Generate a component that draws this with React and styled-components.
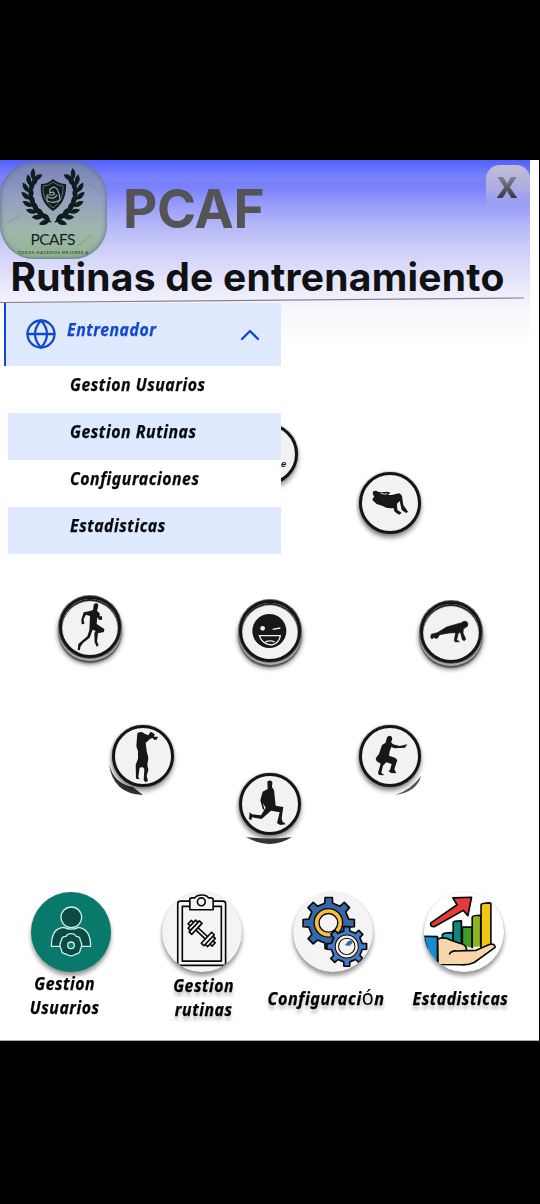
import React from "react";
import styled, { createGlobalStyle, css } from "styled-components";

const Global = createGlobalStyle`
  * { box-sizing: border-box; }
  body { margin: 0; background: #000; }
`;

const Phone = styled.div`
  height: 1204px;
  padding: 160px 1px 163px 0;
  background: #000;
  overflow: hidden;
`;

const Screen = styled.main`
  position: relative;
  display: flex;
  flex-direction: column;
  height: 881px;
  background: #fff;
  border-bottom: 1px solid #aaa;
  font-family: "Noto Sans", sans-serif;
`;

const Header = styled.header`
  width: 530px;
  height: 186px;
  flex: none;
  background: linear-gradient(#5260ff 0, #6570fd 8px, #7b84fa 18px, #7980fb 27px, #9398fa 42px, #b0b3f8 62px, #cccdf8 88px, #dcdcfa 108px, #ebeafb 128px, #f6f6fc 148px, #fff 184px);
`;

const Brand = styled.div`
  display: flex;
  height: 98px;
  padding-top: 2px;
`;

const Logo = styled.svg`
  flex: none;
  width: 107px;
  height: 97px;
  border-radius: 34px;
  background: linear-gradient(#7680b5, #929dc1 35%, #9eb7ac 70%, #91b58e);
  box-shadow: inset 0 0 5px #52648b;
`;

const BrandName = styled.h1`
  margin: 15px 0 0 16px;
  flex: 1;
  font: 700 53px/64px Inter, sans-serif;
  letter-spacing: -0.4px;
  color: #545456;
`;

const Close = styled.button`
  width: 44px;
  height: 44px;
  margin-top: 3px;
  padding: 0;
  border: 0;
  border-radius: 14px 14px 0 0;
  background: linear-gradient(#c2bfd3, #aaaae5 60%, #9fa3f800);
  span {
    display: block;
    margin-left: -2px;
    font: 800 29px/45px Inter, sans-serif;
    background: linear-gradient(#858494 25%, #303039 78%);
    background-clip: text;
    color: transparent;
  }
`;

const Title = styled.h2`
  margin: 0 0 0 10.5px;
  font: 700 39px/38px Inter, sans-serif;
  letter-spacing: ${(p) => p.$tracking}px;
  color: #101113;
  white-space: nowrap;
`;

const Rule = styled.svg`
  display: block;
  width: 524px;
  height: 6px;
  margin-top: 1px;
`;

const Menu = styled.nav`
  position: absolute;
  left: 4px;
  top: 143px;
  width: 277px;
  z-index: 2;
`;

const MenuHead = styled.div`
  display: flex;
  height: 63px;
  padding: 14px 21px 0 20px;
  border-left: 2px solid #1148d0;
  background: #dfe9ff;
  color: #1148d0;
`;

const HeadIcon = styled.svg`
  flex: none;
  width: ${(p) => p.$w}px;
  height: ${(p) => p.$h}px;
  margin-top: ${(p) => p.$top}px;
  fill: none;
  stroke: currentColor;
  stroke-width: 2.3;
  stroke-linecap: round;
  stroke-linejoin: round;
`;

const labelFont = css`
  font-weight: 700;
  font-style: italic;
  font-size: 18px;
  line-height: 24px;
  letter-spacing: 0.6px;
  -webkit-text-stroke: 0.25px currentColor;
  white-space: nowrap;
`;

const Label = styled.span`
  ${labelFont}
  display: block;
  width: max-content;
  transform: scaleX(${(p) => p.$fit || 0.88});
  transform-origin: ${(p) => p.$origin || "left"};
  text-align: center;
  text-shadow: ${(p) => (p.$shadow ? "0 4px 4px #0004" : "none")};
  i {
    font: 400 22px/20px "Noto Sans", sans-serif;
    -webkit-text-stroke: 0;
  }
`;

const HeadLabel = styled.div`
  flex: 1;
  padding-left: 11px;
`;

const MenuItem = styled.div`
  height: 47px;
  margin-left: 4px;
  padding: 6px 0 0 62px;
  background: ${(p) => (p.$tinted ? "#dfe9ff" : "#fff")};
  color: #08090f;
`;

const Wheel = styled.section`
  position: relative;
  flex: none;
  height: 544px;
`;

const Medal = styled.div`
  position: absolute;
  left: ${(p) => p.$x - 31}px;
  top: ${(p) => p.$y - 346 - 31}px;
  width: 62px;
  height: 62px;
  border-radius: 50%;
  background: #f2f2f2;
  border: 3px solid #151515;
  box-shadow: ${(p) =>
    p.$deep
      ? "0 0 0 1px #666, 0 2px 0 1px #aaa, 0 4px 1px 1px #555, 0 5px 5px 1px #0009, inset 0 2px 1px #151515"
      : "0 0 2px #777, 0 4px 5px #0006, -2px 2px 3px #0002"};
  svg { position: absolute; left: -4px; top: -4px; width: 64px; height: 64px; overflow: visible; }
`;

const Shade = styled.svg`
  position: absolute;
  left: ${(p) => p.$x}px;
  top: ${(p) => p.$y - 346}px;
  width: 70px;
  height: 45px;
  filter: blur(0.7px);
`;

const Bottom = styled.footer`
  display: grid;
  grid-template-columns: repeat(4, 131px);
  padding: 2px 0 0 5px;
`;

const Tab = styled.div`
  display: flex;
  flex-direction: column;
  align-items: center;
`;

const TabIcon = styled.svg`
  width: 80px;
  height: 80px;
  border-radius: 50%;
  background: ${(p) => p.$bg};
  box-shadow: 0 4px 4px #0006, 0 0 2px #0002;
  stroke: #080808;
  stroke-width: 5;
  stroke-linejoin: round;
  stroke-linecap: round;
  fill: none;
`;

const TabText = styled.div`
  margin-top: ${(p) => p.$top}px;
  margin-left: ${(p) => p.$shift || 0}px;
`;

const Emblem = () => (
  <Logo viewBox="0 0 107 97">
    <g fill="#111c1d">
      {[1, -1].map((s) => (
        <g key={s} transform={`translate(53 29) scale(${s * 0.92} 0.94)`}>
          <path d="M19-15C33 2 24 25 2 33" fill="none" stroke="#111c1d" strokeWidth="1.5" />
          {[[20, -16, -35], [24, -10, -20], [27, -3, 0], [27, 5, 15], [25, 13, 30], [21, 20, 45], [15, 26, 58], [8, 31, 75]].map(([x, y, r]) => (
            <g key={y} transform={`translate(${x} ${y}) rotate(${r}) scale(1.2)`}>
              <path d="M-1 4Q-7 1-5-5Q1-3-1 4ZM-1 4Q-1-3 5-5Q6 2-1 4Z" />
            </g>
          ))}
        </g>
      ))}
      <path d="M53 17Q59 22 66 22Q67 40 53 49Q39 40 41 22Q48 22 53 17Z" />
      <path d="M53 20Q58 24 63 24Q64 38 53 46Q42 38 43 24Q49 24 53 20Z" fill="none" stroke="#829097" strokeWidth=".7" />
      <path d="M47 39V33H53Q56 32 53 30L50 31V27L54 25Q59 26 60 38Q55 42 47 39M48 35Q54 38 57 33" fill="none" stroke="#9dabad" strokeWidth="1.2" />
    </g>
    <path d="M6 62L21 53M77 84L92 73M89 22L102 33" stroke="#71877c" opacity=".5" />
    <text x="53" y="82.5" textAnchor="middle" fontFamily="Lato" fontSize="15.5" textLength="45" fill="#132220">PCAFS</text>
    <text x="53" y="92" textAnchor="middle" fontFamily="Lato" fontWeight="700" fontSize="4" textLength="70" fill="#344a3d">TODOS HACEMOS MEJORES A</text>
  </Logo>
);

const figures = {
  situp: {
    box: "22 34 192 192",
    art: (
      <>
        <path d="M67 96Q74 91 82 96L91 98L112 96L119 99L112 106L123 106L145 101Q151 102 154 110L158 136L172 156L166 160L153 151L147 124L139 132L140 150L153 160L145 165L132 156L128 145Q109 148 96 139L78 133L65 121Q65 115 71 111Q64 103 67 96Z" />
        <path d="M90 101L104 104L110 101" fill="none" stroke="#f2f2f2" strokeWidth="2.5" />
      </>
    ),
  },
  run: {
    box: "38 28 192 192",
    art: <path d="M145 58Q147 51 154 53Q161 56 158 64L155 75L163 83V92H170V103L161 102L156 95L154 115L177 130L176 139L158 143L155 167L160 179L154 183L148 170L147 142L151 136L142 132L133 156L113 172L105 184L104 193L97 194L99 175L126 152L132 134L134 91L122 87L115 100L117 115L109 116L108 102L115 80L131 77L143 73Z" />,
  },
  push: {
    box: "41 28 192 192",
    art: <path d="M169 96Q175 89 184 93Q190 98 186 107L174 115L173 127L181 145L177 150L171 147L165 124L159 128L154 147L162 153L150 154L147 149L151 126L131 127L103 132L96 143L87 142L88 137L80 145L76 140L78 131L96 126L124 109Z" stroke="#171717" strokeWidth="2" />,
  },
  triceps: {
    box: "33 28 192 192",
    art: <path d="M112 56Q124 48 134 57L145 62L152 51L164 58L162 66L174 66L170 75L162 75L158 70L151 72L137 85L140 109L145 129L142 151L145 166L140 184L144 198L137 203L131 197L133 163L128 157L119 159L115 187L119 194L108 192L107 151L114 132L114 110L109 95Z" />,
  },
  squat: {
    box: "37 26 192 192",
    art: <path d="M124 66Q130 58 138 64Q142 73 136 80L142 87L162 92L185 87L178 97L147 99L137 95L132 108L130 121L148 127L155 134L146 162L152 174L136 173L128 167L133 164L138 146L122 141L112 151L107 172L116 180L100 179L97 173L105 145L93 138L90 129L100 116L109 89L120 82Z" />,
  },
  lunge: {
    box: "413 171 192 192",
    art: <path d="M501 200Q509 193 516 201L515 217L521 225L526 272L549 276L544 309L546 319L557 328L539 330L530 324L538 292L512 287L495 302L484 312L455 307L453 315L446 313L448 292L455 298L482 301L496 278L488 264L493 288L487 281L480 256L487 230L502 222Z" />,
  },
  smile: {
    box: "38 28 192 192",
    art: (
      <>
        <circle cx="132" cy="124" r="51" />
        <circle cx="112" cy="116" r="7" fill="#f2f2f2" />
        <g fill="none" stroke="#f2f2f2" strokeWidth="4">
          <path d="M142 119L165 115M102 138H165Q162 161 139 166Q110 164 102 138ZM119 157Q135 150 148 157" />
        </g>
      </>
    ),
  },
  logo: {
    box: "0 0 192 192",
    art: <text x="138" y="136" fontFamily="Liberation Sans" fontSize="28" fontWeight="700" fontStyle="italic">e</text>,
  },
};

const medals = [
  ["logo", 266.7, 454],
  ["situp", 389.5, 502.5],
  ["run", 89.5, 626.5, true],
  ["smile", 269.5, 631, true],
  ["push", 451, 632, true],
  ["triceps", 143, 755.5],
  ["squat", 389.5, 755.5],
  ["lunge", 269.5, 804],
];

// Closed cog outline with flat-topped teeth.
const cog = (cx, cy, outer, inner, teeth, turn = 0) => {
  const pts = [];
  for (let i = 0; i < teeth; i++) {
    [[-0.25, inner], [-0.18, outer], [0.18, outer], [0.25, inner]].forEach(([o, r]) => {
      const a = ((i + o) / teeth) * Math.PI * 2 - Math.PI / 2 + turn;
      pts.push(`${(cx + r * Math.cos(a)).toFixed(1)} ${(cy + r * Math.sin(a)).toFixed(1)}`);
    });
  }
  return `M${pts.join("L")}Z`;
};

const UsersIcon = () => (
  <TabIcon viewBox="63 20 240 240" $bg="#08796b">
    <g stroke="#c9ede5" strokeWidth="4" fill="#0b4b43">
      <path d="M124 183Q124 128 161 126Q184 137 206 126Q242 132 242 183Z" />
      <circle cx="184" cy="96" r="31" />
      <path d="M183 145Q195 145 198 153Q211 153 211 166Q219 179 211 192Q211 205 198 206Q183 217 168 206Q154 206 154 192Q146 179 154 166Q154 153 168 153Q172 145 183 145Z" />
      <circle cx="183" cy="180" r="10" fill="#08796b" />
    </g>
  </TabIcon>
);

const ClipboardIcon = () => (
  <TabIcon viewBox="455 18 244 244" $bg="#f4f4f4">
    <path d="M503 242V53Q503 46 512 46H640Q649 46 649 54V242ZM517 62H636V229H517Z" />
    <path d="M540 72V39Q540 36 547 36H555Q560 27 577 27Q592 27 597 36H604Q611 36 611 42V72Z" fill="#f4f4f4" />
    <circle cx="575" cy="48" r="12" />
    <g transform="translate(576 144) rotate(43)" strokeWidth="5" fill="#f4f4f4">
      <path d="M-24-5H24V5H-24Z" />
      <path d="M-50-7H-39V7H-50ZM39-7H50V7H39Z" />
      <path d="M-41-17H-30V17H-41ZM30-17H41V17H30Z" />
      <path d="M-31-23H-20V23H-31ZM20-23H31V23H20Z" />
    </g>
  </TabIcon>
);

const GearsIcon = () => (
  <TabIcon viewBox="96 18 244 244" $bg="#f4f4f4">
    <path d={cog(205, 113, 79, 62, 8)} fill="#3568a8" />
    <circle cx="204" cy="112" r="36" fill="#f4f4f4" stroke="#080808" strokeWidth="19" />
    <circle cx="204" cy="112" r="36" stroke="#f6bd43" strokeWidth="11" />
    <path d={cog(260, 184, 61, 48, 8)} fill="#4279c9" />
    <circle cx="260" cy="184" r="30" fill="#f4f4f4" stroke="#080808" strokeWidth="13" />
    <circle cx="260" cy="184" r="30" stroke="#f8eedb" strokeWidth="7" />
    <path d="M247 174L256 179L263 169Q275 162 278 171Q270 186 258 181Z" fill="#3568a8" stroke="none" />
  </TabIcon>
);

const StatsIcon = () => (
  <TabIcon viewBox="491 18 244 244" $bg="#fff">
    <path d="M512 112L592 57L579 36L636 34L625 90L611 74L522 124Q508 124 512 112Z" fill="#e43b3a" />
    <path d="M547 159V148Q550 142 580 142V165" fill="#18a8bd" />
    <path d="M580 165V111Q580 106 605 106V180" fill="#11877c" />
    <path d="M608 183V125H638V188" fill="#449b27" />
    <path d="M638 186V95Q638 89 664 89V184" fill="#8eb51e" />
    <path d="M665 187V57Q665 51 695 51V178" fill="#f2c514" />
    <path d="M532 162Q552 153 573 165L602 175Q621 178 621 197L650 196L690 178Q707 174 708 187L644 233Q628 241 606 240L534 239Z" fill="#f8d6ac" />
    <path d="M569 207Q575 195 593 198L619 197" />
    <path d="M490 153L532 154V231L510 226Z" fill="#188bd1" />
  </TabIcon>
);

export default function App() {
  return (
    <>
      <Global />
      <Phone>
        <Screen>
          <Header>
            <Brand>
              <Emblem />
              <BrandName>PCAF</BrandName>
              <Close><span>X</span></Close>
            </Brand>
            <Title $tracking={0.25}>Rutinas de entrenamiento</Title>
            <Rule viewBox="0 0 524 6"><path d="M0 5.5L524 1" stroke="#858489" strokeWidth="1.2" /></Rule>
          </Header>
          <Menu>
            <MenuHead>
              <HeadIcon $w={30} $h={30} $top={2} viewBox="0 0 30 30">
                <circle cx="15" cy="15" r="13.5" />
                <path d="M1.5 15H28.5M15 1.5C7 10 7 20 15 28.5C23 20 23 10 15 1.5" />
              </HeadIcon>
              <HeadLabel><Label>Entrenador</Label></HeadLabel>
              <HeadIcon $w={20} $h={12} $top={12} viewBox="0 0 20 12"><path d="M2 10L10 2L18 10" /></HeadIcon>
            </MenuHead>
            <MenuItem><Label>Gestion Usuarios</Label></MenuItem>
            <MenuItem $tinted><Label>Gestion Rutinas</Label></MenuItem>
            <MenuItem><Label>Configuraciones</Label></MenuItem>
            <MenuItem $tinted><Label>Estadisticas</Label></MenuItem>
          </Menu>
          <Wheel>
            <Shade $x={108} $y={756} viewBox="0 0 70 45"><path d="M1 8Q6 28 25 31L35 39Q5 38 1 8Z" fill="#333" /></Shade>
            <Shade $x={388} $y={766} viewBox="0 0 70 45"><path d="M7 29Q23 24 33 10Q29 26 7 29Z" fill="#555" /></Shade>
            {medals.map(([name, x, y, deep]) => (
              <Medal key={name} $x={x} $y={y} $deep={deep}>
                <svg viewBox={figures[name].box} fill="#171717">{figures[name].art}</svg>
              </Medal>
            ))}
            <Shade $x={234} $y={806} viewBox="0 0 70 45"><path d="M12 31Q35 34 58 31Q36 45 12 31Z" fill="#333" /></Shade>
          </Wheel>
          <Bottom>
            <Tab>
              <UsersIcon />
              <TabText $top={-1} $shift={-11}><Label $origin="center">Gestion<br />Usuarios</Label></TabText>
            </Tab>
            <Tab>
              <ClipboardIcon />
              <TabText $top={1} $shift={5}><Label $origin="center" $shadow>Gestion<br />rutinas</Label></TabText>
            </Tab>
            <Tab>
              <GearsIcon />
              <TabText $top={14} $shift={-12}><Label $origin="center" $shadow $fit={0.9}>Configuraci<i>ó</i>n</Label></TabText>
            </Tab>
            <Tab>
              <StatsIcon />
              <TabText $top={14} $shift={-6}><Label $origin="center" $shadow>Estadisticas</Label></TabText>
            </Tab>
          </Bottom>
        </Screen>
      </Phone>
    </>
  );
}
